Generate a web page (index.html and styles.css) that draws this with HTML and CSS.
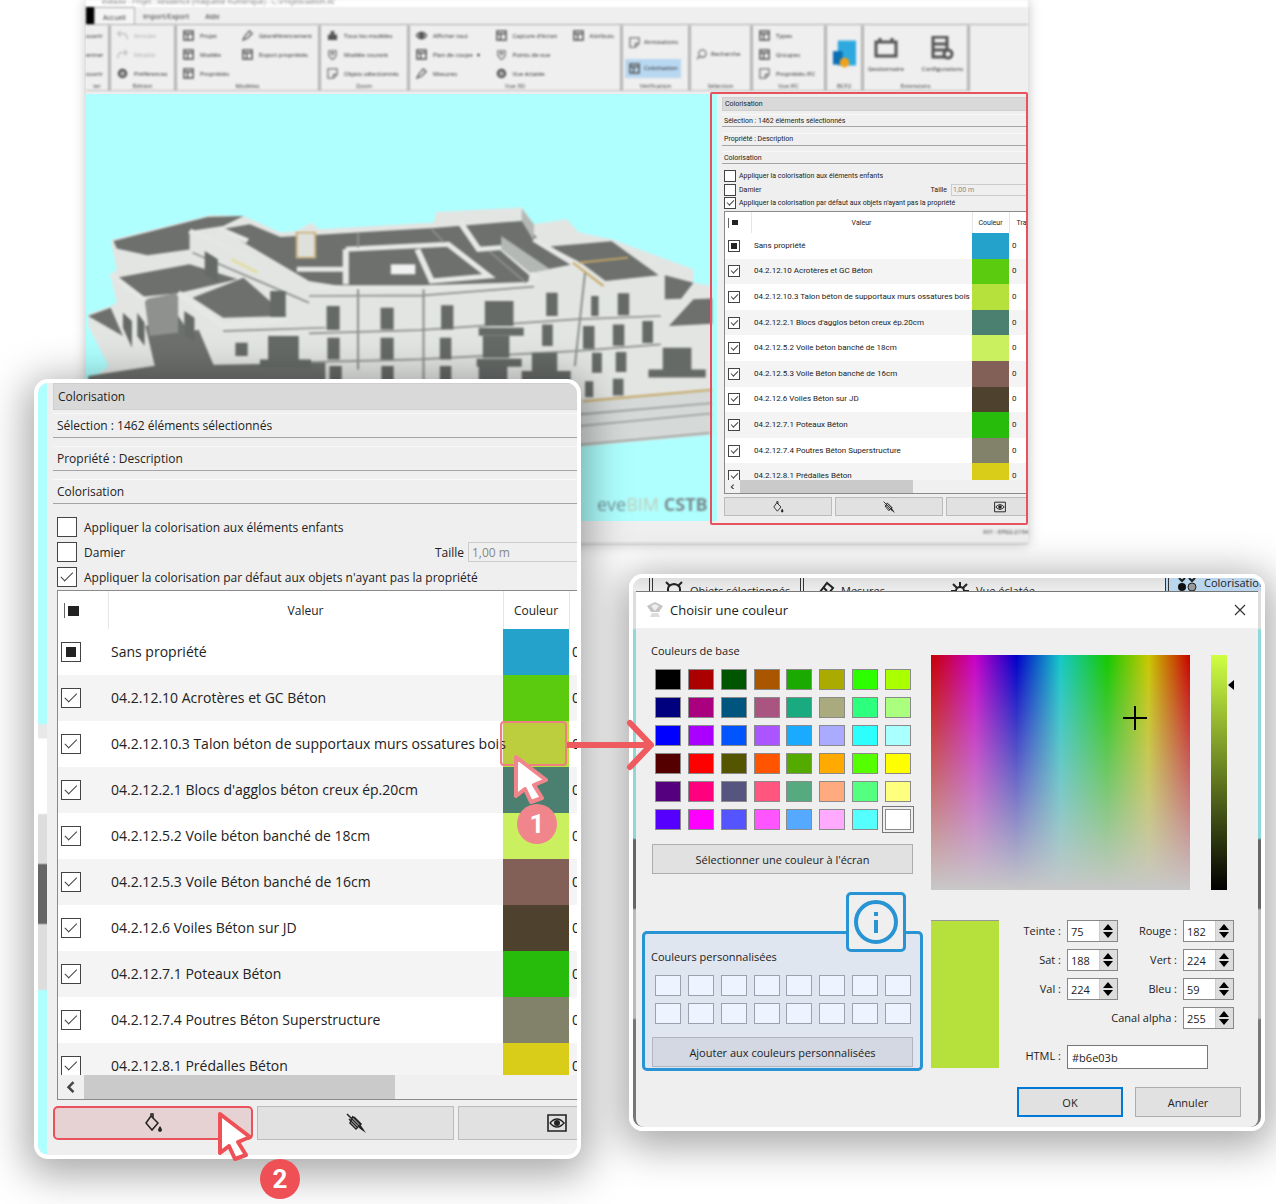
FILE: index.html
```html
<!DOCTYPE html>
<html lang="fr">
<head>
<meta charset="utf-8">
<meta name="viewport" content="width=device-width, initial-scale=1">
<title>Colorisation</title>
<link rel="stylesheet" href="styles.css">
</head>
<body>
<svg class="defs" aria-hidden="true">
  <symbol id="i-bucket" viewBox="0 0 20 20"><path d="M8 3l7 7-6 7-6-7 5-7M8 3V1h2v4" fill="none" stroke="#222" stroke-width="1.5"/><path d="M17 13q4 5 0 6q-4-1 0-6" fill="#222"/></symbol>
  <symbol id="i-nobucket" viewBox="0 0 20 20"><path d="M8 4l7 7-5 5-6-6 3-7M1 1l16 16M3 6l9 9M7 4l8 8" fill="none" stroke="#222" stroke-width="1.5"/><path d="M14 11l6 9-7-5z" fill="#222"/></symbol>
  <symbol id="i-eye" viewBox="0 0 20 20"><path d="M1 2h18v16H1z" fill="none" stroke="#222" stroke-width="1.6"/><path d="M3 10q7-8 14 0q-7 8-14 0" fill="none" stroke="#222" stroke-width="1.6"/><circle cx="10" cy="10" r="3" fill="#222"/></symbol>
  <symbol id="i-box" viewBox="0 0 12 12"><path d="M1 1h10v10H1zM1 4h10M5 4v7" fill="none" stroke="#555" stroke-width="1.6"/></symbol>
  <symbol id="i-fill" viewBox="0 0 12 12"><path d="M4 1h4v4h3v6H1V5h3z" fill="#555"/></symbol>
  <symbol id="i-gear" viewBox="0 0 12 12"><circle cx="6" cy="6" r="4" fill="#aaa" stroke="#555" stroke-width="2.4"/></symbol>
  <symbol id="i-note" viewBox="0 0 12 12"><path d="M1 1h10v6l-4 4H1zM7 11V7h4" fill="none" stroke="#777" stroke-width="1.4"/></symbol>
  <symbol id="i-find" viewBox="0 0 12 12"><circle cx="7" cy="5" r="4" fill="none" stroke="#777" stroke-width="1.4"/><path d="M4 8l-3 3" stroke="#777" stroke-width="1.6"/></symbol>
  <symbol id="i-pen" viewBox="0 0 12 12"><path d="M1 11l2-4 5-6 3 3-5 5zM7 8l3-3" fill="none" stroke="#666" stroke-width="1.5"/></symbol>
  <symbol id="i-ring" viewBox="0 0 12 12"><path d="M2 2h8v5l-3 4H5L2 7z" fill="none" stroke="#777" stroke-width="1.4"/><circle cx="6" cy="5" r="2" fill="#888"/></symbol>
  <symbol id="i-look" viewBox="0 0 12 12"><path d="M0 6q6-7 12 0q-6 7-12 0" fill="none" stroke="#555" stroke-width="1.6"/><circle cx="6" cy="6" r="3" fill="#555"/></symbol>
  <symbol id="i-undo" viewBox="0 0 12 12"><path d="M4 1L1 4l3 3M1 4h7q3 1 3 6" fill="none" stroke="#bbb" stroke-width="1.4"/></symbol>
  <symbol id="i-cursor" viewBox="-3 -4 36 54"><path d="M0 0L30 23 18 28 26 41 15 45 9 32 0 39z" fill="#fff" stroke="currentColor" stroke-width="4" stroke-linejoin="round"/></symbol>
</svg>

<main class="stage">
  <section class="app">
    <header class="titlebar">eveBIM - Projet : Résidence (maquette numérique) - C:\Projets\Béton.ifc</header>
    <nav class="tabs"><a class="file" href="#"></a><a class="on" href="#">Accueil</a><a href="#">Import/Export</a><a href="#">Aide</a></nav>
    <div class="ribbon">
      <div class="group cut"><div class="items"><span>ouvrir</span><span>ermer</span><span>ouvrir</span></div><b>ier</b></div>
      <div class="group"><div class="items"><span class="off"><svg><use href="#i-undo"/></svg>Annuler</span><span class="off"><svg class="flip"><use href="#i-undo"/></svg>Rétablir</span><span><svg><use href="#i-gear"/></svg>Préférences</span></div><b>Édition</b></div>
      <div class="group"><div class="items"><span><svg><use href="#i-box"/></svg>Projet</span><span><svg><use href="#i-box"/></svg>Modèle</span><span><svg><use href="#i-box"/></svg>Propriétés</span><span><svg><use href="#i-pen"/></svg>Géoréférencement</span><span><svg><use href="#i-box"/></svg>Export propriétés</span></div><b>Modèles</b></div>
      <div class="group"><div class="items"><span><svg><use href="#i-fill"/></svg>Tous les modèles</span><span><svg><use href="#i-ring"/></svg>Modèle courant</span><span><svg><use href="#i-note"/></svg>Objets sélectionnés</span></div><b>Zoom</b></div>
      <div class="group"><div class="items"><span><svg><use href="#i-look"/></svg>Afficher tout</span><span><svg><use href="#i-box"/></svg>Plan de coupe &nbsp; ▾</span><span><svg><use href="#i-pen"/></svg>Mesures</span><span><svg><use href="#i-box"/></svg>Capture d'écran</span><span><svg><use href="#i-ring"/></svg>Points de vue</span><span><svg><use href="#i-gear"/></svg>Vue éclatée</span><span><svg><use href="#i-box"/></svg>Attributs</span></div><b>Vue 3D</b></div>
      <div class="group two"><div class="items"><span><svg><use href="#i-note"/></svg>Annotations</span><span class="sel"><svg><use href="#i-box"/></svg>Colorisation</span></div><b>Vérification</b></div>
      <div class="group one"><div class="items"><span><svg><use href="#i-find"/></svg>Recherche</span></div><b>Sélection</b></div>
      <div class="group"><div class="items"><span><svg><use href="#i-box"/></svg>Types</span><span><svg><use href="#i-box"/></svg>Groupes</span><span><svg><use href="#i-note"/></svg>Propriétés IFC</span></div><b>Vue IFC</b></div>
      <div class="group one"><div class="items"><svg class="logo" viewBox="0 0 26 30"><path d="M6 1h19v26H6z" fill="#2ea9df"/><path d="M1 12h10v14H1z" fill="#0c6fb4"/><circle cx="13" cy="24" r="5" fill="#f0a21c"/></svg></div><b>BCF2</b></div>
      <div class="group big"><div class="items"><span><svg viewBox="0 0 24 24"><path d="M2 6h20v14H2zM6 6V2M18 6V2" fill="none" stroke="#555" stroke-width="3"/></svg>Gestionnaire</span><span><svg viewBox="0 0 24 24"><path d="M3 1h14v20H3zM3 8h14M3 14h14" fill="none" stroke="#555" stroke-width="3"/><circle cx="18" cy="18" r="4" fill="#efefef" stroke="#555" stroke-width="3"/></svg>Configurations</span></div><b>Extensions</b></div>
    </div>
    <div class="view">
      <svg class="scene" viewBox="86 95 625 425" preserveAspectRatio="xMinYMin slice" role="img" aria-label="Maquette 3D">
        <g transform="translate(80 170) scale(.408 .333)">
          <path d="M75 212L320 137 400 140 490 190 530 185 565 160 585 180 865 160 870 128 1080 115 1110 165 1190 150 1220 190 1300 210 1500 300 1500 340 1600 360V790L1230 830 300 760 20 640 70 590 20 470V435L75 410 90 400 75 320 90 300z" fill="#e3e5e3"/>
          <path d="M1220 690L1600 655V790L1220 830z" fill="#d5d9d7"/>
          <path d="M1220 735L1600 695M1220 770L1600 725M1220 826L1540 790" stroke="#8b908c" stroke-width="4"/>
          <g fill="#6d706d">
            <path d="M82 215L312 143 400 140 350 170 268 185 272 240 165 258 90 238z"/>
            <path d="M90 325L268 285 385 330 240 372 150 382z"/>
            <path d="M275 385L400 325 505 440 350 445z"/>
            <path d="M345 180L415 165 490 203 865 176 1080 155 1125 215 1205 285 1100 310 1095 342 845 358 650 352 560 335z"/>
            <path d="M1148 232L1300 216 1415 318 1285 335 1225 280z"/>
            <path d="M1430 318L1500 340 1470 388 1430 390z"/><path d="M1500 390L1600 385V460L1440 470z"/>
            <path d="M20 440L75 415 105 500z"/><path d="M160 470L240 440 330 600H185z"/>
            <path d="M190 520L290 480 345 640H190zM20 620L180 590 600 580 600 640H20z"/>
          </g>
          <path d="M158 390L240 370V490L170 500z" fill="#8e918d"/>
          <g fill="none" stroke="#e6e8e6" stroke-width="15">
            <path d="M268 185L560 355 840 355 1110 345M340 178L410 215M530 300H650M650 240V345M650 240L900 225 1000 320 860 335 825 240M930 160L975 240 1030 235 1120 330M1110 210L1230 300M240 370L350 470 505 450M75 315L160 395"/>
          </g>
          <path d="M268 190V250L560 400V340z" fill="#e3e5e3"/>
          <path d="M1030 200L1150 300 1100 310 1030 240z" fill="#b4b8b5"/>
          <path d="M1080 118L1110 165V215L1080 155z" fill="#b4b8b5"/>
          <path d="M680 190V235M860 180L890 220M1000 245L1090 340M350 485L600 475M560 380L840 378 1110 352M840 360V640M680 360V600M1235 310L1210 590M560 492L830 482 1210 450 1420 440M560 578L830 570 1210 545 1420 525M275 250L560 400" fill="none" stroke="#8b8f8c" stroke-width="5"/>
          <path d="M530 190H575V265H530z" fill="#dfe0dc" stroke="#c9b17d" stroke-width="5"/>
          <path d="M760 285H820V315H760z" fill="#f0f1f0"/>
          <path d="M1205 280L1280 350M1220 280L1340 265M1230 695L1600 655" fill="none" stroke="#c6a765" stroke-width="6"/>
          <path d="M370 270L435 310" stroke="#e2dfa0" stroke-width="8"/>
          <g fill="#666a67">
            <path d="M603 410h32v72h-32zM735 415h32v65h-32zM883 408h30v72h-30zM605 505h30v65h-30zM735 505h32v65h-32zM880 505h28v65h-28zM610 590h30v55h-30zM737 590h30v55h-30zM880 590h28v55h-28z"/>
            <path d="M990 395h70v75h-70zM975 475h110v24H975zM985 500h65v65h-65zM970 568h110v24H970zM975 592h70v50h-70z"/>
            <path d="M1140 370h28v70h-28zM1130 465h26v65h-26zM1250 380h18v60h-18zM1315 372h28v66h-28zM1230 470h28v68h-28zM1303 465h28v64h-28zM1375 455h26v66h-26zM1252 550h24v60h-24zM1310 548h26v60h-26zM1235 635h20v48h-20zM1303 628h26v50h-26zM1105 550h62v60h-62zM1080 605h120v40h-120zM1425 535h70v65h-70zM1390 600h140v24h-140z"/>
            <path d="M305 245l32 25v70l-32-25zM465 365h38v78h-38zM460 500h75v75h-75zM440 570h125v24H440zM380 520h30v40h-30zM255 425l25 20v70l-25-20zM105 430l22 25v80l-22-60zM140 430l18 30v70l-18-30z"/>
          </g>
        </g>
      </svg>
      <p class="brand">eve<span>BIM</span> <b>CSTB</b></p>
    </div>
    <footer class="status">X01 : EPSG:2154</footer>
    <aside class="dock"><div class="panel small" data-panel></div></aside>
  </section>

  <section class="card zoomed">
    <div class="inner"><div class="edge"></div><div class="panel large" data-panel></div></div>
    <div class="pick"></div>
    <svg class="arrow" viewBox="0 0 90 52"><path d="M0 26H84M63 4L84 26 63 48" fill="none" stroke="#ef5a5f" stroke-width="6" stroke-linecap="round" stroke-linejoin="round"/></svg>
    <svg class="cursor c1"><use href="#i-cursor"/></svg><span class="badge b1">1</span>
    <svg class="cursor c2"><use href="#i-cursor"/></svg><span class="badge b2">2</span>
  </section>

  <section class="card picker">
    <div class="behind">
      <span><svg viewBox="0 0 20 20"><path d="M2 2l3 3M18 2l-3 3M4 16V9q0-4 6-5q6 1 6 5v7" fill="none" stroke="#222" stroke-width="2"/></svg>Objets sélectionnés</span>
      <span><svg viewBox="0 0 20 20"><path d="M1 17L12 3l6 5-8 10M9 8l3 3" fill="none" stroke="#222" stroke-width="2"/></svg>Mesures</span>
      <span class="plain"><svg viewBox="0 0 20 20"><path d="M10 2v5M3 4l4 4M17 4l-4 4M1 11h5M19 11h-5" stroke="#222" stroke-width="2"/><circle cx="10" cy="11" r="4" fill="none" stroke="#222" stroke-width="2"/></svg>Vue éclatée</span>
      <span class="blue"><svg viewBox="0 0 20 20"><circle cx="5" cy="10" r="4" fill="#111"/><circle cx="15" cy="10" r="4" fill="#999" stroke="#222"/><path d="M2 1l3 3 3-3M12 1l3 3 3-3" fill="none" stroke="#222" stroke-width="2"/></svg>Colorisation</span>
    </div>
    <form class="dialog" onsubmit="return false">
      <header><svg viewBox="0 0 18 18"><path d="M1 5l8-4 8 4-4 6H5z" fill="#c4c4c4"/><path d="M5 5l4-2 4 2-4 5z" fill="#eee"/><path d="M6 12h6l2 4H4z" fill="#ddd"/></svg><h2>Choisir une couleur</h2><button class="close" type="button" aria-label="Fermer"><svg viewBox="0 0 12 12"><path d="M1 1l10 10M11 1L1 11" stroke="#333" stroke-width="1.2"/></svg></button></header>
      <div class="cols">
        <div class="left">
          <h3>Couleurs de base</h3>
          <div class="swatches" id="base"></div>
          <button class="btn wide" type="button">Sélectionner une couleur à l'écran</button>
          <fieldset class="custom">
            <h3>Couleurs personnalisées</h3>
            <div class="swatches" id="own"></div>
            <button class="btn wide" type="button">Ajouter aux couleurs personnalisées</button>
            <svg class="info" viewBox="0 0 54 54"><circle cx="27" cy="27" r="20" fill="none" stroke="#2994d4" stroke-width="4"/><path d="M25 17h4v4h-4zM25 25h4v13h-4z" fill="#2994d4"/></svg>
          </fieldset>
        </div>
        <div class="right">
          <div class="fields">
            <div class="hue"><svg class="cross" viewBox="0 0 24 24"><path d="M12 0v24M0 12h24" stroke="#000" stroke-width="2"/></svg></div>
            <div class="value"><i></i></div>
          </div>
          <div class="mix">
            <div class="preview"></div>
            <div class="nums">
              <label for="h">Teinte :</label><div class="spin"><input id="h" value="75"><i></i></div>
              <label for="r">Rouge :</label><div class="spin"><input id="r" value="182"><i></i></div>
              <label for="s">Sat :</label><div class="spin"><input id="s" value="188"><i></i></div>
              <label for="g">Vert :</label><div class="spin"><input id="g" value="224"><i></i></div>
              <label for="v">Val :</label><div class="spin"><input id="v" value="224"><i></i></div>
              <label for="b">Bleu :</label><div class="spin"><input id="b" value="59"><i></i></div>
              <label for="a" class="span3">Canal alpha :</label><div class="spin"><input id="a" value="255"><i></i></div>
              <label for="x" class="hex">HTML :</label><input id="x" class="hex code" value="#b6e03b">
            </div>
          </div>
          <div class="actions"><button class="btn ok">OK</button><button class="btn" type="button">Annuler</button></div>
        </div>
      </div>
    </form>
  </section>
</main>
<script src="script.js"></script>
</body>
</html>
```
FILE: script.js
```js
const rows = [
  ["Sans propriété", "#24a2cc"],
  ["04.2.12.10 Acrotères et GC Béton", "#5bcb10"],
  ["04.2.12.10.3 Talon béton de supportaux murs ossatures bois", "#b6e03b"],
  ["04.2.12.2.1 Blocs d'agglos béton creux ép.20cm", "#4b7f70"],
  ["04.2.12.5.2 Voile béton banché de 18cm", "#caf060"],
  ["04.2.12.5.3 Voile Béton banché de 16cm", "#826058"],
  ["04.2.12.6 Voiles Béton sur JD", "#4e412e"],
  ["04.2.12.7.1 Poteaux Béton", "#27bb0c"],
  ["04.2.12.7.4 Poutres Béton Superstructure", "#82826a"],
  ["04.2.12.8.1 Prédalles Béton", "#dacd19"]
];

const body = rows.map(([name, color], i) => `
  <tr><td><input type="checkbox" aria-label="${name}" ${i ? "checked" : 'class="partial"'}></td>
  <td>${name}</td><td style="background:${color}"></td><td>0</td></tr>`).join("");

const icon = id => `<button type="button"><svg><use href="#i-${id}"/></svg></button>`;

document.querySelectorAll("[data-panel]").forEach(panel => {
  panel.innerHTML = `
    <h2>Colorisation</h2>
    <div class="lines"><p>Sélection : 1462 éléments sélectionnés</p><p>Propriété : Description</p><p>Colorisation</p></div>
    <div class="checks">
      <label><input type="checkbox">Appliquer la colorisation aux éléments enfants</label>
      <div class="pair"><label><input type="checkbox">Damier</label><label class="size">Taille <input class="text" value="1,00 m" disabled></label></div>
      <label><input type="checkbox" checked>Appliquer la colorisation par défaut aux objets n'ayant pas la propriété</label>
    </div>
    <div class="grid">
      <div class="clip"><table>
        <thead><tr><th><span class="all"></span></th><th>Valeur</th><th>Couleur</th><th>Transparence</th></tr></thead>
        <tbody>${body}</tbody>
      </table></div>
      <div class="scroll"><svg viewBox="0 0 10 10"><path d="M7 1L3 5l4 4" fill="none" stroke="#444" stroke-width="2"/></svg><i></i></div>
    </div>
    <div class="tools">${icon("bucket")}${icon("nobucket")}${icon("eye")}</div>`;
});

const base = `000000 aa0000 005500 aa5500 1aaa00 aaaa00 2dff00 aaff00
00007f aa007f 00557f aa557f 1aaa7f aaaa7f 2dff7f aaff7f
0000ff aa00ff 0055ff aa55ff 1aaaff aaaaff 2dffff aaffff
550000 ff0000 555500 ff5500 55aa00 ffaa00 55ff00 ffff00
55007f ff007f 55557f ff557f 55aa7f ffaa7f 55ff7f ffff7f
5500ff ff00ff 5555ff ff55ff 55aaff ffaaff 55ffff ffffff`.split(/\s+/);
const swatch = c => `<button type="button" aria-label="#${c}" style="background:#${c}"></button>`;
document.getElementById("base").innerHTML = base.map(swatch).join("");
document.getElementById("own").innerHTML = Array(16).fill("eef4ff").map(swatch).join("");
```
FILE: styles.css
```css
* { box-sizing: border-box; }
body { margin: 0; background: #fff; font-family: "Open Sans", "Noto Sans", sans-serif; font-size: 11px; color: #222; }
h2, h3, p { margin: 0; font-weight: 400; font-size: inherit; }
button, input { font: inherit; color: inherit; margin: 0; padding: 0; }
.defs { position: absolute; width: 0; height: 0; }
.stage { position: relative; min-height: 100vh; overflow-x: clip; }

/* application window */
.app { position: relative; margin: 0 248px 0 86px; background: #efefef; box-shadow: 0 0 12px rgba(0,0,0,.25); display: flex; flex-direction: column; }
.titlebar { height: 7px; line-height: 4px; background: #fff; overflow: hidden; font-size: 7px; color: #777; padding-left: 16px; filter: blur(1px); }
.tabs { display: flex; height: 18px; border-bottom: 1px solid #aaa; filter: blur(1px); font-size: 7px; line-height: 19px; }
.tabs a { color: #333; text-decoration: none; padding: 0 8px; }
.tabs .file { width: 8px; padding: 0; background: #000; }
.tabs .on { border: 1px solid #aaa; border-bottom: 0; background: #f5f5f5; }
.ribbon { display: grid; grid-template-columns: 25px 66px 144px 89px 213px 68px 62px 74px 37px 106px; height: 66px; filter: blur(1px); font-size: 6px; overflow: hidden; }
.group { border-right: 3px solid #b5b5b5; border-bottom: 1px solid #bbb; display: flex; flex-direction: column; }
.group .items { display: grid; grid-template-rows: repeat(3, 19px); grid-auto-flow: column; justify-content: space-between; height: 58px; padding: 1px 6px 0 6px; }
.group span { display: flex; align-items: center; gap: 6px; white-space: nowrap; color: #222; }
.group .off { color: #aaa; }
.group svg { width: 11px; height: 11px; }
.flip { transform: scaleX(-1); }
.group b { font-weight: 400; text-align: center; line-height: 7px; color: #333; }
.cut .items { padding: 1px 0 0; }
.two .items { grid-template-rows: 26px 26px; padding: 4px 2px 2px; }
.two .items span { padding: 0 3px 0 4px; gap: 4px; height: 19px; align-self: center; }
.two .sel { background: #b8d7f0; }
.one .items { grid-template-rows: 58px; padding: 0 5px; align-items: center; }
.one .items span { gap: 4px; }
.group .logo { width: 25px; height: 30px; }
.big .items { grid-template-rows: 58px; padding: 0 4px; }
.big .items span { flex-direction: column; justify-content: center; gap: 5px; }
.big .items svg { width: 24px; height: 24px; }
.view { position: relative; margin-top: 3px; height: 427px; background: #afffff; overflow: hidden; }
.scene { display: block; width: 626px; height: 426px; filter: blur(1px); }
.brand { position: absolute; left: 511px; bottom: 6px; font-size: 18px; line-height: 22px; color: #75969a; filter: blur(1px); }
.brand span { color: #c3cdb8; }
.brand b { font-size: 18px; color: #7b8d8f; }
.status { height: 23px; border-bottom: 1px solid #bbb; text-align: right; font-size: 6px; line-height: 22px; filter: blur(1px); overflow: hidden; white-space: nowrap; color: #333; }
.dock { position: absolute; right: 0; top: 92px; width: 318px; height: 433px; border: 2px solid #e8525c; border-radius: 2px; padding: 3px 0 0 10px; overflow: hidden; background: linear-gradient(90deg, transparent 5px, #efefef 5px); }

/* colouring panel, in two sizes */
.panel { display: flex; flex-direction: column; font-size: var(--fs); white-space: nowrap; overflow: hidden; background: #efefef; }
.small { --fs: 7px; --row: 8px; --head: 14px; --lines: 50px; --line: 13px; --checks: 39px; --box: 12px; --inset: 2px; --top: 2px; --th: 21px; --body: 256px; --clip: 268px; --c1: 26px; --c2: 221px; --c3: 37px; --bar: 13px; --bw: 108px; --bh: 19px; --bg: 3px; --ic: 12px; --pad: 2px; --bt: 3px; --mid: 6px; --gap: 3px; --arrow: 15px; --thumb: 173px; font-family: Roboto, "Open Sans", sans-serif; }
.large { --fs: 12px; --row: 14px; --head: 27px; --lines: 91px; --line: 25px; --checks: 70px; --box: 20px; --inset: 4px; --top: 3px; --th: 38px; --body: 460px; --clip: 484px; --c1: 50px; --c2: 395px; --c3: 66px; --bar: 24px; --bw: 197px; --bh: 34px; --bg: 4px; --ic: 20px; --pad: 4px; --bt: 6px; --mid: 13px; --gap: 7px; --arrow: 26px; --thumb: 311px; }
.panel h2 { height: var(--head); background: #d9d9d9; border: 1px solid #cfcfcf; border-right: 0; padding-left: var(--pad); display: flex; align-items: center; }
.lines { margin-top: 3px; height: var(--lines); display: flex; flex-direction: column; justify-content: space-between; }
.lines p { height: var(--line); border-top: 1px solid #f8f8f8; border-bottom: 1px solid #a5a5a5; padding-left: var(--pad); display: flex; align-items: center; }
.checks { margin: var(--mid) 0 0 var(--inset); height: var(--checks); display: flex; flex-direction: column; justify-content: space-between; }
.checks label { display: flex; align-items: center; gap: var(--gap); height: var(--box); }
.pair { display: flex; justify-content: space-between; }
.checks .size { gap: 4px; }
.size .text { height: var(--box); border: 1px solid #ccc; border-right: 0; background: transparent; color: #888; padding-left: 3px; }
.large .size .text { width: 109px; }
.small .size .text { width: 75px; padding-left: 1px; }
input[type=checkbox] { appearance: none; flex: none; width: var(--box); height: var(--box); border: 1px solid #444; background: #fff; display: grid; place-items: center; }
input[type=checkbox]:checked::before { content: ""; width: 60%; height: 30%; border: solid #444; border-width: 0 0 1px 1px; transform: translateY(-30%) rotate(-45deg); }
input.partial::before { content: ""; width: 56%; height: 56%; background: #222; }
.grid { margin: var(--top) 0 0 var(--inset); border: 1px solid #8a8a8a; border-right: 0; background: #fff; }
.clip { height: var(--clip); overflow: hidden; }
table { table-layout: fixed; border-collapse: collapse; width: calc(var(--c1) + var(--c2) + var(--c3) + 90px); }
th, td { padding: 0; font-weight: 400; }
th { height: var(--th); border-right: 1px solid #e6e6e6; }
th:nth-child(1) { width: var(--c1); }
th:nth-child(2) { width: var(--c2); }
th:nth-child(3) { width: var(--c3); }
th:nth-child(4) { text-align: left; padding-left: 7px; }
.large th:nth-child(4) { padding-left: 14px; }
td { font-size: var(--row); height: calc(var(--body) / 10); line-height: 1; }
td:nth-child(1) { padding-left: 3px; }
td:nth-child(2) { padding-left: 3px; }
td:nth-child(4) { padding-left: 3px; }
tbody tr:nth-child(even) { background: #f4f4f4; }
.all { display: block; width: var(--ic); margin-left: var(--bt); border-left: 1px solid #666; position: relative; height: calc(var(--fs) + 3px); }
.all::after { content: ""; position: absolute; left: 3px; top: 20%; width: calc(var(--fs) - 1px); height: calc(var(--fs) - 2px); background: #222; }
.scroll { display: flex; height: var(--bar); background: #f0f0f0; }
.scroll svg { width: var(--arrow); padding: 1px; height: 60%; align-self: center; }
.scroll i { width: var(--thumb); background: #cacaca; }
.tools { display: flex; gap: var(--bg); padding: var(--bt) 0 14px var(--inset); }
.tools button { flex: none; width: var(--bw); height: var(--bh); border: 1px solid #bbb; background: #e1e1e1; display: grid; place-items: center; }
.tools svg { width: var(--ic); height: var(--ic); }
.large .tools { padding-left: 0; }
.large .tools button:first-child { width: 200px; border: 2px solid #e8525c; border-radius: 5px; background: #e6d2d2; }

/* floating cards */
.card { position: absolute; border: 4px solid #fff; border-radius: 14px; background: #efefef; box-shadow: 0 8px 40px 8px rgba(0,0,0,.34); }
.zoomed { left: 34px; top: 379px; width: 547px; z-index: 2; }
.inner { display: flex; border-radius: 10px; overflow: hidden; padding-bottom: 1px; }
.edge { flex: none; width: 15px; background: linear-gradient(90deg, transparent 9px, #efefef 9px), linear-gradient(#afffff 340px, #e8e8e8 342px 355px, #fff 356px 430px, #ddd 432px 480px, #666 482px 540px, #ddd 542px 606px, #afffff 608px); }
.large { flex: 1; min-width: 0; }
.pick { position: absolute; left: 462px; top: 338px; width: 67px; height: 45px; border: 2px solid #ef7f80; border-radius: 4px; background: rgba(240,80,90,.12); }
.arrow { position: absolute; left: 529px; top: 336px; width: 90px; height: 52px; }
.cursor { position: absolute; width: 36px; height: 54px; }
.badge { position: absolute; width: 40px; height: 40px; border-radius: 50%; color: #fff; font: 700 26px/40px "Roboto", sans-serif; text-align: center; }
.c1 { left: 475px; top: 370px; color: #f0868c; }
.b1 { left: 479px; top: 421px; background: #f0868c; }
.c2 { left: 179px; top: 727px; color: #ef5055; }
.b2 { left: 222px; top: 776px; background: #ef5055; }

.picker { left: 629px; top: 574px; width: 636px; padding: 0 3px; background: linear-gradient(#ddd 50px, #8fd8da 52px 260px, #666 262px 330px, #bbb 332px 440px, #777 442px); }
.behind { height: 13px; margin: 0 -3px; border-radius: 10px 10px 0 0; display: grid; grid-template-columns: 151px 134px 231px 1fr; padding-left: 16px; background: linear-gradient(#dedede, #ededed); overflow: hidden; }
.behind span { display: flex; align-items: flex-start; gap: 6px; padding-left: 11px; border-left: 4px double #333; white-space: nowrap; line-height: 25px; height: 25px; }
.behind svg { width: 20px; height: 20px; margin-top: 2px; flex: none; }
.behind .plain { border: 0; padding-left: 16px; gap: 6px; }
.behind .blue { background: #b9d6ee; line-height: 9px; padding-left: 8px; gap: 7px; }
.behind .blue svg { margin-top: -1px; }
.dialog { background: #efefef; border-top: 1px solid #777; border-radius: 0 0 8px 8px; }
.dialog header { display: flex; align-items: center; height: 36px; background: #fff; padding: 0 12px 0 10px; gap: 6px; font-size: 13px; }
.dialog header > svg { width: 18px; height: 18px; }
.dialog h2 { flex: 1; }
.close { border: 0; background: none; width: 12px; height: 12px; display: grid; }
.cols { display: grid; grid-template-columns: 262px 1fr; gap: 18px; padding: 0 15px 10px; }
.left { display: flex; flex-direction: column; padding-top: 15px; }
h3 { line-height: 16px; }
.swatches { display: grid; grid-template-columns: repeat(8, 26px); justify-content: space-between; gap: 7px 0; margin: 10px 2px 0 4px; }
.swatches button { height: 21px; border: 1px solid #8a8a8a; }
#base button:last-child { outline: 1px solid #777; outline-offset: 2px; }
.btn { height: 30px; border: 1px solid #adadad; background: #e1e1e1; }
.wide { width: 261px; margin: 14px 0 0 1px; }
.custom { position: relative; width: 281px; margin: 57px 0 0 -9px; border: 3px solid #2994d4; border-radius: 5px; padding: 15px 6px 1px 6px; background: #e0e6f0; min-width: 0; }
.custom .swatches { margin-right: 3px; }
.custom .btn { background: #d3d8e2; margin-top: 13px; border-color: #b0b5c0; display: block; }
.custom .swatches button { border-color: #9aa2b0; }
.info { position: absolute; right: 14px; top: -42px; width: 60px; height: 60px; border: 3px solid #2994d4; border-radius: 5px; background: #efefef; }
.right { padding-top: 27px; }
.fields { display: flex; gap: 21px; }
.hue { position: relative; width: 259px; height: 235px; background: linear-gradient(transparent, #c8c8c8), linear-gradient(90deg, #c80000, #c800c8 17%, #0000c8 33%, #14c8c8 50%, #14c800 68%, #c8c800 84%, #c80000); }
.cross { position: absolute; left: 192px; top: 51px; width: 24px; height: 24px; }
.value { position: relative; width: 16px; background: linear-gradient(#cfff43, #000); }
.value i { position: absolute; left: 17px; top: 25px; border: 5px solid transparent; border-left: 0; border-right: 6px solid #000; }
.mix { display: flex; margin-top: 30px; }
.preview { width: 68px; height: 148px; background: #b6e03b; border-top: 1px solid #999; }
.nums { display: grid; grid-template-columns: 62px 51px 53px 51px; gap: 7px 6px; align-content: start; }
.nums label { text-align: right; line-height: 22px; }
.spin { display: flex; border: 1px solid #888; background: #fff; height: 22px; }
.spin input { width: 31px; border: 0; background: none; padding-left: 3px; }
.spin i { flex: 1; background: #ddd; position: relative; border-left: 1px solid #ccc; }
.spin i::before, .spin i::after { content: ""; position: absolute; left: 3px; border: 5px solid transparent; }
.spin i::before { top: 3px; border-top: 0; border-bottom: 6px solid #000; }
.spin i::after { bottom: 3px; border-bottom: 0; border-top: 6px solid #000; }
.span3 { grid-column: span 3; }
.hex { margin-top: 9px; }
.code { grid-column: 2 / span 3; width: 141px; height: 24px; border: 1px solid #777; background: #fff; padding-left: 4px; }
.actions { display: flex; gap: 12px; margin: 18px 0 0 86px; }
.actions .btn { width: 106px; }
.actions .ok { border: 2px solid #0078d7; }
```
